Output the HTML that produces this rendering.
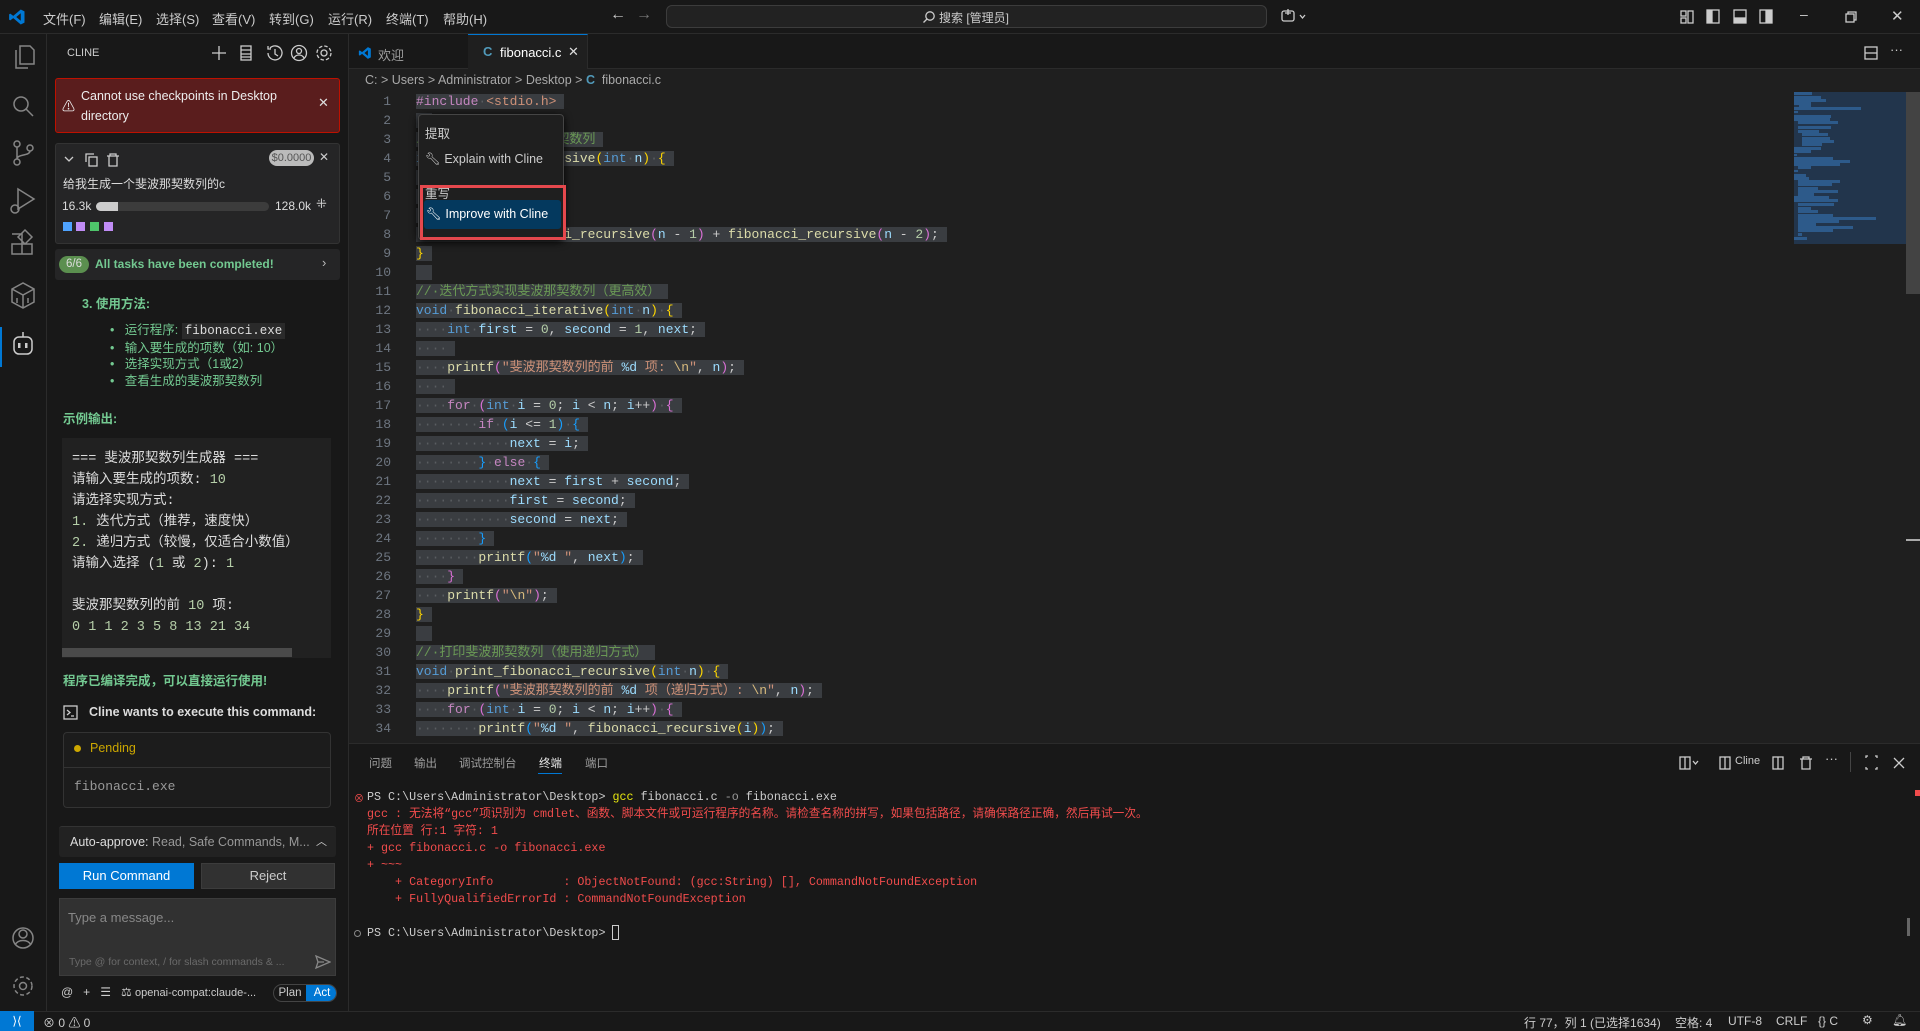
<!DOCTYPE html>
<html><head><meta charset="utf-8">
<style>
*{box-sizing:border-box;margin:0;padding:0}
body{width:1920px;height:1031px;overflow:hidden;background:#1f1f1f;font-family:"Liberation Sans","Noto Sans CJK SC",sans-serif;color:#cccccc;font-size:13px;position:relative}
.a{position:absolute}
.mono{font-family:"Liberation Mono","Noto Sans CJK SC",monospace}
#title{left:0;top:0;width:1920px;height:34px;background:#181818;border-bottom:1px solid #2b2b2b}
.menu{top:9px;font-size:13px;color:#cccccc}
#act{left:0;top:34px;width:47px;height:977px;background:#181818;border-right:1px solid #2b2b2b}
#side{left:47px;top:34px;width:302px;height:977px;background:#181818;border-right:1px solid #2b2b2b}
#tabs{left:349px;top:34px;width:1571px;height:35px;background:#181818;border-bottom:1px solid #2b2b2b}
.ln{position:absolute;left:349px;width:42px;text-align:right;color:#6e7681;font-size:13px;line-height:19px}
.cl{position:absolute;left:416px;font-size:13px;line-height:19px;white-space:pre;color:#cccccc}
.sel{background:#3a3d41;padding-right:8px}
i{font-style:normal;color:#5a5d61}
.k{color:#569cd6}.c{color:#c586c0}.f{color:#dcdcaa}.s{color:#ce9178}.n{color:#b5cea8}.v{color:#9cdcfe}.m{color:#6a9955}.g{color:#ffd700}.p{color:#da70d6}.b{color:#179fff}
#panel{left:349px;top:743px;width:1571px;height:268px;background:#181818;border-top:1px solid #2b2b2b}
.tl{position:absolute;left:367px;font-size:11.7px;line-height:17px;white-space:pre;color:#f14c4c}
#status{left:0;top:1011px;width:1920px;height:20px;background:#181818;border-top:1px solid #2b2b2b;font-size:12px}
.ptab{position:absolute;top:755px;font-size:11.5px;color:#9d9d9d}
.green{color:#73c991}
.icon{position:absolute;stroke:#cccccc;fill:none;stroke-width:1.3}
</style></head><body>

<div id="title" class="a"></div>
<svg class="a" style="left:8px;top:8px" width="18" height="18" viewBox="0 0 24 24"><path d="M17 2 L22 4.5 V19.5 L17 22 L7 13.5 L3 16.5 L1.5 15.5 V8.5 L3 7.5 L7 10.5 Z M17 7 L11 12 L17 17 Z" fill="#0078d4"/></svg>
<div class="a menu" style="left:43px">文件(F)</div>
<div class="a menu" style="left:99px">编辑(E)</div>
<div class="a menu" style="left:156px">选择(S)</div>
<div class="a menu" style="left:212px">查看(V)</div>
<div class="a menu" style="left:269px">转到(G)</div>
<div class="a menu" style="left:328px">运行(R)</div>
<div class="a menu" style="left:386px">终端(T)</div>
<div class="a menu" style="left:443px">帮助(H)</div>
<div class="a" style="left:610px;top:6px;font-size:16px;color:#ccc">←</div>
<div class="a" style="left:636px;top:6px;font-size:16px;color:#777">→</div>
<div class="a" style="left:666px;top:5px;width:601px;height:23px;background:#222;border:1px solid #3c3c3c;border-radius:6px"></div>
<svg class="a icon" style="left:922px;top:10px" width="14" height="14" viewBox="0 0 14 14"><circle cx="8" cy="6" r="4.2"/><path d="M5 9 L1.5 12.5"/></svg>
<div class="a" style="left:939px;top:9px;font-size:12px;color:#ccc">搜索 [管理员]</div>
<svg class="a icon" style="left:1280px;top:8px" width="28" height="18" viewBox="0 0 28 18"><rect x="2" y="3" width="12" height="10" rx="2"/><path d="M8 1 V7 M5 5 H11 M20 7 L22.5 10 L25 7"/></svg>
<svg class="a icon" style="left:1680px;top:9px" width="100" height="16" viewBox="0 0 100 16"><rect x="1" y="2" width="5" height="5"/><rect x="1" y="9" width="5" height="5"/><rect x="8" y="2" width="5" height="12"/><rect x="27" y="1" width="12" height="13"/><rect x="28" y="2" width="4" height="11" fill="#ccc"/><rect x="54" y="1" width="12" height="13"/><rect x="55" y="9" width="10" height="4" fill="#ccc"/><rect x="80" y="1" width="12" height="13"/><rect x="86" y="2" width="5" height="11" fill="#ccc"/></svg>
<div class="a" style="left:1800px;top:6px;font-size:14px;color:#ccc">–</div>
<svg class="a icon" style="left:1845px;top:11px" width="12" height="12" viewBox="0 0 12 12"><rect x="1" y="3" width="8" height="8"/><path d="M3 3 V1 H11 V9 H9"/></svg>
<div class="a" style="left:1891px;top:7px;font-size:15px;color:#ccc">✕</div>

<div id="act" class="a"></div>
<svg class="a" style="left:0;top:34px" width="47" height="977" viewBox="0 0 47 977" fill="none" stroke="#858585" stroke-width="1.5">
<path d="M16 16 V34 H28 M20 12 H30 L34 16 V30 H20 Z"/>
<circle cx="21" cy="70" r="7"/><path d="M26 75 L33 82"/>
<circle cx="17" cy="110" r="3"/><circle cx="17" cy="128" r="3"/><circle cx="30" cy="114" r="3"/><path d="M17 113 V125 M30 117 C30 122 17 120 17 125"/>
<path d="M18 155 L34 165 L18 175 Z"/><circle cx="15" cy="175" r="4"/>
<path d="M12 210 H22 V220 H12 Z M12 200 H22 V210 M22 210 H32 V220 H22 M25 196 L32 203 L25 210 L18 203 Z"/>
<path d="M12 255 L23 249 L34 255 V268 L23 274 L12 268 Z M12 255 L23 261 L34 255 M23 261 V274 M17 264 V269 M28 264 V269"/>
<rect x="14" y="303" width="18" height="17" rx="5" stroke="#cccccc"/><path d="M23 298 V303" stroke="#cccccc"/><rect x="18" y="309" width="2.5" height="5" fill="#ccc" stroke="none"/><rect x="25" y="309" width="2.5" height="5" fill="#ccc" stroke="none"/>
<circle cx="23" cy="904" r="10"/><circle cx="23" cy="900" r="4"/><path d="M15 911 C18 905 28 905 31 911"/>
<circle cx="23" cy="952" r="3.5"/><circle cx="23" cy="952" r="9" stroke-dasharray="4 2.5"/>
</svg>
<div class="a" style="left:0;top:327px;width:2px;height:40px;background:#0078d4"></div>

<div id="side" class="a"></div>
<div class="a" style="left:67px;top:47px;font-size:11px;color:#ccc">CLINE</div>
<svg class="a icon" style="left:211px;top:44px" width="125" height="18" viewBox="0 0 125 18"><path d="M8 2 V16 M1 9 H15"/><rect x="30" y="2" width="10" height="14"/><path d="M30 6 H40 M30 10 H40 M30 13 H40"/><path d="M57 9 A7 7 0 1 0 59 4 M57 2 V5 H60 M64 5 V10 L67 12"/><circle cx="88" cy="9" r="7.5"/><circle cx="88" cy="7" r="2.5"/><path d="M83 14 C85 10 91 10 93 14"/><circle cx="113" cy="9" r="3"/><circle cx="113" cy="9" r="7" stroke-dasharray="3.5 2"/></svg>

<div class="a" style="left:55px;top:78px;width:285px;height:55px;background:#5a1d1d;border:1px solid #be1100;border-radius:3px"></div>
<div class="a" style="left:62px;top:96px;font-size:13px;color:#eee">⚠</div>
<div class="a" style="left:81px;top:86px;font-size:12.5px;color:#eee;line-height:20px;width:220px">Cannot use checkpoints in Desktop directory</div>
<div class="a" style="left:318px;top:95px;font-size:13px;color:#ddd">✕</div>

<div class="a" style="left:55px;top:143px;width:285px;height:101px;background:#252526;border:1px solid #333;border-radius:3px"></div>
<svg class="a icon" style="left:63px;top:152px" width="70" height="16" viewBox="0 0 70 16"><path d="M2 5 L6 9 L10 5"/><rect x="26" y="5" width="8" height="9"/><path d="M23 10 V2 H31"/><path d="M44 4 H56 M47 4 V2 H53 V4 M46 4 V14 H54 V4"/></svg>
<div class="a" style="left:269px;top:150px;width:45px;height:16px;background:#bbb;border-radius:8px;color:#555;font-size:11px;text-align:center;line-height:16px">$0.0000</div>
<div class="a" style="left:319px;top:150px;font-size:12px;color:#ccc">✕</div>
<div class="a" style="left:63px;top:175px;font-size:12px;color:#ddd">给我生成一个斐波那契数列的c</div>
<div class="a" style="left:62px;top:199px;font-size:12px;color:#ddd">16.3k</div>
<div class="a" style="left:96px;top:202px;width:173px;height:9px;background:#3c3c3c;border-radius:5px"></div>
<div class="a" style="left:96px;top:202px;width:22px;height:9px;background:#ccc;border-radius:5px 0 0 5px"></div>
<div class="a" style="left:275px;top:199px;font-size:12px;color:#ddd">128.0k</div>
<div class="a" style="left:316px;top:196px;font-size:13px;color:#ccc">⁜</div>
<div class="a" style="left:63px;top:222px;width:9px;height:9px;background:#4fa3ff"></div>
<div class="a" style="left:76px;top:222px;width:9px;height:9px;background:#c08cf5"></div>
<div class="a" style="left:90px;top:222px;width:9px;height:9px;background:#4ec46a"></div>
<div class="a" style="left:104px;top:222px;width:9px;height:9px;background:#c08cf5"></div>

<div class="a" style="left:55px;top:249px;width:285px;height:31px;background:#252526;border-radius:3px"></div>
<div class="a" style="left:59px;top:256px;width:30px;height:17px;background:#5b8f4f;border-radius:9px;color:#ddd;font-size:11.5px;text-align:center;line-height:17px">6/6</div>
<div class="a green" style="left:95px;top:257px;font-size:12px;font-weight:bold">All tasks have been completed!</div>
<div class="a" style="left:322px;top:255px;font-size:13px;color:#bbb">›</div>

<div class="a green" style="left:82px;top:293px;font-size:12.5px;font-weight:bold">3. 使用方法:</div>
<div class="a green" style="left:110px;top:322px;font-size:12.5px;line-height:16.5px">
<div>•&nbsp;&nbsp; 运行程序: <span class="mono" style="background:#2a2a2a;color:#ddd;padding:1px 3px">fibonacci.exe</span></div>
<div>•&nbsp;&nbsp; 输入要生成的项数（如: 10）</div>
<div>•&nbsp;&nbsp; 选择实现方式（1或2）</div>
<div>•&nbsp;&nbsp; 查看生成的斐波那契数列</div>
</div>
<div class="a green" style="left:63px;top:408px;font-size:12.5px;font-weight:bold">示例输出:</div>
<div class="a" style="left:62px;top:438px;width:269px;height:220px;background:#212121"></div>
<div class="a mono" style="left:72px;top:449px;font-size:13.5px;line-height:21px;color:#ddd;white-space:pre">=== 斐波那契数列生成器 ===
请输入要生成的项数: <span class="n">10</span>
请选择实现方式:
<span class="n">1.</span> 迭代方式（推荐，速度快）
<span class="n">2.</span> 递归方式（较慢，仅适合小数值）
请输入选择 (<span class="n">1</span> 或 <span class="n">2</span>): <span class="n">1</span>

斐波那契数列的前 <span class="n">10</span> 项:
<span class="n">0 1 1 2 3 5 8 13 21 34</span></div>
<div class="a" style="left:62px;top:648px;width:230px;height:9px;background:#4a4a4a"></div>
<div class="a green" style="left:63px;top:670px;font-size:12.5px;font-weight:bold">程序已编译完成，可以直接运行使用!</div>
<svg class="a icon" style="left:63px;top:705px" width="15" height="15" viewBox="0 0 15 15"><rect x="1" y="1" width="13" height="13"/><path d="M4 5 L7 7.5 L4 10 M8 11 H11"/></svg>
<div class="a" style="left:89px;top:705px;font-size:12.5px;font-weight:bold;color:#ddd">Cline wants to execute this command:</div>
<div class="a" style="left:63px;top:732px;width:268px;height:76px;border:1px solid #333;border-radius:4px;background:#1c1c1c"></div>
<div class="a" style="left:63px;top:767px;width:268px;height:1px;background:#333"></div>
<div class="a" style="left:74px;top:745px;width:7px;height:7px;border-radius:50%;background:#cca700"></div>
<div class="a" style="left:90px;top:741px;font-size:12.5px;color:#cca700">Pending</div>
<div class="a mono" style="left:74px;top:779px;font-size:13px;color:#999">fibonacci.exe</div>
<div class="a" style="left:59px;top:826px;width:277px;height:31px;background:#222;border-top:1px solid #333;border-radius:3px"></div>
<div class="a" style="left:70px;top:835px;font-size:12.5px;color:#ddd">Auto-approve: <span style="color:#999">Read, Safe Commands, M...</span></div>
<div class="a" style="left:316px;top:833px;font-size:11px;color:#ccc">︿</div>
<div class="a" style="left:59px;top:863px;width:135px;height:26px;background:#0078d4;color:#fff;text-align:center;line-height:26px;font-size:13px">Run Command</div>
<div class="a" style="left:201px;top:863px;width:134px;height:26px;background:#313131;border:1px solid #3c3c3c;color:#ccc;text-align:center;line-height:24px;font-size:13px">Reject</div>
<div class="a" style="left:59px;top:898px;width:277px;height:78px;background:#313131;border:1px solid #3c3c3c"></div>
<div class="a" style="left:68px;top:910px;font-size:13px;color:#888">Type a message...</div>
<div class="a" style="left:69px;top:956px;font-size:10.5px;color:#6a6a6a">Type @ for context, / for slash commands &amp; ...</div>
<svg class="a icon" style="left:315px;top:955px" width="16" height="14" viewBox="0 0 16 14"><path d="M1 1 L15 7 L1 13 L3 7 Z M3 7 H9" stroke="#888"/></svg>
<div class="a" style="left:61px;top:985px;font-size:12px;color:#ccc">@&nbsp;&nbsp; +&nbsp;&nbsp; ☰&nbsp;&nbsp; ⚖ <span style="font-size:11px">openai-compat:claude-...</span></div>
<div class="a" style="left:273px;top:984px;width:64px;height:18px;border:1px solid #444;border-radius:9px;overflow:hidden;font-size:11.5px">
<div class="a" style="left:0;top:0;width:32px;height:16px;text-align:center;line-height:16px;color:#ccc">Plan</div>
<div class="a" style="left:32px;top:0;width:32px;height:16px;background:#0078d4;text-align:center;line-height:16px;color:#fff">Act</div></div>

<div id="tabs" class="a"></div>
<div class="a" style="left:468px;top:34px;width:120px;height:35px;background:#1f1f1f;border-top:1px solid #0078d4;border-right:1px solid #2b2b2b"></div>
<svg class="a" style="left:358px;top:46px" width="14" height="14" viewBox="0 0 24 24"><path d="M17 2 L22 4.5 V19.5 L17 22 L7 13.5 L3 16.5 L1.5 15.5 V8.5 L3 7.5 L7 10.5 Z M17 7 L11 12 L17 17 Z" fill="#0078d4"/></svg>
<div class="a" style="left:378px;top:45px;font-size:13px;color:#9d9d9d">欢迎</div>
<div class="a" style="left:483px;top:44px;font-size:13px;color:#519aba;font-weight:bold">C</div>
<div class="a" style="left:500px;top:45px;font-size:13px;color:#fff">fibonacci.c</div>
<div class="a" style="left:568px;top:44px;font-size:13px;color:#ddd">✕</div>
<svg class="a icon" style="left:1864px;top:46px" width="14" height="14" viewBox="0 0 14 14"><rect x="1" y="1" width="12" height="12"/><path d="M1 7 H13"/></svg>
<div class="a" style="left:1890px;top:42px;font-size:13px;color:#ccc">···</div>

<div class="a" style="left:365px;top:73px;font-size:12.5px;color:#a9a9a9">C: &gt; Users &gt; Administrator &gt; Desktop &gt; <span style="color:#519aba;font-weight:bold">C</span>&nbsp; fibonacci.c</div>

<div class="mono">
<div class="ln" style="top:92px">1</div><div class="ln" style="top:111px">2</div><div class="ln" style="top:130px">3</div><div class="ln" style="top:149px">4</div><div class="ln" style="top:168px">5</div><div class="ln" style="top:187px">6</div><div class="ln" style="top:206px">7</div><div class="ln" style="top:225px">8</div><div class="ln" style="top:244px">9</div><div class="ln" style="top:263px">10</div><div class="ln" style="top:282px">11</div><div class="ln" style="top:301px">12</div><div class="ln" style="top:320px">13</div><div class="ln" style="top:339px">14</div><div class="ln" style="top:358px">15</div><div class="ln" style="top:377px">16</div><div class="ln" style="top:396px">17</div><div class="ln" style="top:415px">18</div><div class="ln" style="top:434px">19</div><div class="ln" style="top:453px">20</div><div class="ln" style="top:472px">21</div><div class="ln" style="top:491px">22</div><div class="ln" style="top:510px">23</div><div class="ln" style="top:529px">24</div><div class="ln" style="top:548px">25</div><div class="ln" style="top:567px">26</div><div class="ln" style="top:586px">27</div><div class="ln" style="top:605px">28</div><div class="ln" style="top:624px">29</div><div class="ln" style="top:643px">30</div><div class="ln" style="top:662px">31</div><div class="ln" style="top:681px">32</div><div class="ln" style="top:700px">33</div><div class="ln" style="top:719px">34</div>

<div class="cl" style="top:92px"><span class="sel"><span class="c">#include</span><i>·</i><span class="s">&lt;stdio.h&gt;</span></span></div>
<div class="cl" style="top:111px"><span class="sel"> </span></div>
<div class="cl" style="top:130px"><span class="sel"><span class="m">//·递归方式实现斐波那契数列</span></span></div>
<div class="cl" style="top:149px"><span class="sel"><span class="k">int</span><i>·</i><span class="f">fibonacci_recursive</span><span class="g">(</span><span class="k">int</span><i>·</i><span class="v">n</span><span class="g">)</span><i>·</i><span class="g">{</span></span></div>
<div class="cl" style="top:168px"><span class="sel"><i>····</i><span class="c">if</span><i>·</i><span class="p">(</span><span class="v">n</span> &lt;= <span class="n">1</span><span class="p">)</span><i>·</i><span class="p">{</span></span></div>
<div class="cl" style="top:187px"><span class="sel"><i>········</i><span class="c">return</span><i>·</i><span class="v">n</span>;</span></div>
<div class="cl" style="top:206px"><span class="sel"><i>····</i><span class="p">}</span></span></div>
<div class="cl" style="top:225px"><span class="sel"><i>····</i><span class="c">return</span><i>·</i><span class="f">fibonacci_recursive</span><span class="p">(</span><span class="v">n</span> - <span class="n">1</span><span class="p">)</span> + <span class="f">fibonacci_recursive</span><span class="p">(</span><span class="v">n</span> - <span class="n">2</span><span class="p">)</span>;</span></div>
<div class="cl" style="top:244px"><span class="sel"><span class="g">}</span></span></div>
<div class="cl" style="top:263px"><span class="sel"> </span></div>
<div class="cl" style="top:282px"><span class="sel"><span class="m">//·迭代方式实现斐波那契数列（更高效）</span></span></div>
<div class="cl" style="top:301px"><span class="sel"><span class="k">void</span><i>·</i><span class="f">fibonacci_iterative</span><span class="g">(</span><span class="k">int</span><i>·</i><span class="v">n</span><span class="g">)</span><i>·</i><span class="g">{</span></span></div>
<div class="cl" style="top:320px"><span class="sel"><i>····</i><span class="k">int</span><i>·</i><span class="v">first</span> = <span class="n">0</span>, <span class="v">second</span> = <span class="n">1</span>, <span class="v">next</span>;</span></div>
<div class="cl" style="top:339px"><span class="sel"><i>····</i></span></div>
<div class="cl" style="top:358px"><span class="sel"><i>····</i><span class="f">printf</span><span class="p">(</span><span class="s">"斐波那契数列的前 <span class="v">%d</span> 项: <span style="color:#d7ba7d">\n</span>"</span>, <span class="v">n</span><span class="p">)</span>;</span></div>
<div class="cl" style="top:377px"><span class="sel"><i>····</i></span></div>
<div class="cl" style="top:396px"><span class="sel"><i>····</i><span class="c">for</span><i>·</i><span class="p">(</span><span class="k">int</span><i>·</i><span class="v">i</span> = <span class="n">0</span>; <span class="v">i</span> &lt; <span class="v">n</span>; <span class="v">i</span>++<span class="p">)</span><i>·</i><span class="p">{</span></span></div>
<div class="cl" style="top:415px"><span class="sel"><i>········</i><span class="c">if</span><i>·</i><span class="b">(</span><span class="v">i</span> &lt;= <span class="n">1</span><span class="b">)</span><i>·</i><span class="b">{</span></span></div>
<div class="cl" style="top:434px"><span class="sel"><i>············</i><span class="v">next</span> = <span class="v">i</span>;</span></div>
<div class="cl" style="top:453px"><span class="sel"><i>········</i><span class="b">}</span><i>·</i><span class="c">else</span><i>·</i><span class="b">{</span></span></div>
<div class="cl" style="top:472px"><span class="sel"><i>············</i><span class="v">next</span> = <span class="v">first</span> + <span class="v">second</span>;</span></div>
<div class="cl" style="top:491px"><span class="sel"><i>············</i><span class="v">first</span> = <span class="v">second</span>;</span></div>
<div class="cl" style="top:510px"><span class="sel"><i>············</i><span class="v">second</span> = <span class="v">next</span>;</span></div>
<div class="cl" style="top:529px"><span class="sel"><i>········</i><span class="b">}</span></span></div>
<div class="cl" style="top:548px"><span class="sel"><i>········</i><span class="f">printf</span><span class="b">(</span><span class="s">"<span class="v">%d</span> "</span>, <span class="v">next</span><span class="b">)</span>;</span></div>
<div class="cl" style="top:567px"><span class="sel"><i>····</i><span class="p">}</span></span></div>
<div class="cl" style="top:586px"><span class="sel"><i>····</i><span class="f">printf</span><span class="p">(</span><span class="s">"<span style="color:#d7ba7d">\n</span>"</span><span class="p">)</span>;</span></div>
<div class="cl" style="top:605px"><span class="sel"><span class="g">}</span></span></div>
<div class="cl" style="top:624px"><span class="sel"> </span></div>
<div class="cl" style="top:643px"><span class="sel"><span class="m">//·打印斐波那契数列（使用递归方式）</span></span></div>
<div class="cl" style="top:662px"><span class="sel"><span class="k">void</span><i>·</i><span class="f">print_fibonacci_recursive</span><span class="g">(</span><span class="k">int</span><i>·</i><span class="v">n</span><span class="g">)</span><i>·</i><span class="g">{</span></span></div>
<div class="cl" style="top:681px"><span class="sel"><i>····</i><span class="f">printf</span><span class="p">(</span><span class="s">"斐波那契数列的前 <span class="v">%d</span> 项（递归方式）: <span style="color:#d7ba7d">\n</span>"</span>, <span class="v">n</span><span class="p">)</span>;</span></div>
<div class="cl" style="top:700px"><span class="sel"><i>····</i><span class="c">for</span><i>·</i><span class="p">(</span><span class="k">int</span><i>·</i><span class="v">i</span> = <span class="n">0</span>; <span class="v">i</span> &lt; <span class="v">n</span>; <span class="v">i</span>++<span class="p">)</span><i>·</i><span class="p">{</span></span></div>
<div class="cl" style="top:719px"><span class="sel"><i>········</i><span class="f">printf</span><span class="b">(</span><span class="s">"<span class="v">%d</span> "</span>, <span class="f">fibonacci_recursive</span><span class="g">(</span><span class="v">i</span><span class="g">)</span><span class="b">)</span>;</span></div>
</div>

<div class="a" style="left:1794px;top:92px;width:112px;height:152px;background:#22354c"></div>
<svg class="a" style="left:1794px;top:92px" width="112" height="152"><g fill="#2d5a8a">
<rect x="0" y="0" width="18" height="3"/><rect x="0" y="4" width="27" height="3"/><rect x="0" y="7" width="32" height="3"/><rect x="0" y="10" width="17" height="3"/><rect x="5" y="13" width="12" height="2"/><rect x="0" y="15" width="67" height="3"/><rect x="0" y="19" width="4" height="2"/><rect x="0" y="23" width="37" height="3"/><rect x="0" y="26" width="36" height="3"/><rect x="4" y="29" width="40" height="3"/><rect x="4" y="34" width="33" height="3"/><rect x="4" y="38" width="21" height="3"/><rect x="8" y="41" width="26" height="3"/><rect x="8" y="45" width="28" height="3"/><rect x="8" y="48" width="32" height="3"/><rect x="8" y="51" width="20" height="3"/><rect x="0" y="55" width="27" height="3"/><rect x="0" y="58" width="17" height="3"/><rect x="0" y="62" width="3" height="2"/><rect x="0" y="65" width="39" height="3"/><rect x="0" y="68" width="56" height="3"/><rect x="0" y="71" width="46" height="3"/><rect x="4" y="74" width="13" height="3"/><rect x="0" y="78" width="4" height="2"/><rect x="0" y="82" width="12" height="3"/><rect x="0" y="85" width="15" height="3"/><rect x="4" y="88" width="42" height="3"/><rect x="4" y="91" width="34" height="3"/><rect x="4" y="95" width="20" height="3"/><rect x="4" y="98" width="40" height="3"/><rect x="4" y="101" width="16" height="3"/><rect x="0" y="104" width="35" height="3"/><rect x="0" y="107" width="44" height="3"/><rect x="4" y="111" width="36" height="3"/><rect x="4" y="115" width="13" height="3"/><rect x="4" y="118" width="20" height="3"/><rect x="4" y="122" width="35" height="3"/><rect x="4" y="125" width="78" height="3"/><rect x="4" y="128" width="41" height="3"/><rect x="4" y="131" width="18" height="3"/><rect x="4" y="134" width="55" height="3"/><rect x="4" y="137" width="35" height="3"/><rect x="4" y="141" width="4" height="3"/><rect x="0" y="145" width="13" height="3"/></g></svg>
<div class="a" style="left:1906px;top:92px;width:14px;height:202px;background:#434343"></div>
<div class="a" style="left:1906px;top:539px;width:14px;height:2px;background:#aaa"></div>

<div class="a" style="left:418px;top:114px;width:146px;height:126px;background:#1f1f1f;border:1px solid #454545;border-radius:4px;box-shadow:0 2px 8px #000"></div>
<div class="a" style="left:425px;top:123px;font-size:12.5px;color:#ccc">提取</div>
<div class="a" style="left:425px;top:152px;font-size:12.5px;color:#ccc">🔧︎ Explain with Cline</div>
<div class="a" style="left:425px;top:183px;font-size:12.5px;color:#ccc">重写</div>
<div class="a" style="left:424px;top:200px;width:137px;height:29px;background:#04395e;border-radius:3px"></div>
<div class="a" style="left:426px;top:207px;font-size:12.5px;color:#fff">🔧︎ Improve with Cline</div>
<div class="a" style="left:420px;top:185px;width:146px;height:55px;border:3px solid #e5484d"></div>

<div id="panel" class="a"></div>
<div class="ptab" style="left:369px">问题</div>
<div class="ptab" style="left:414px">输出</div>
<div class="ptab" style="left:459px">调试控制台</div>
<div class="ptab" style="left:539px;color:#e7e7e7">终端</div>
<div class="a" style="left:538px;top:773px;width:24px;height:1px;background:#0078d4"></div>
<div class="ptab" style="left:585px">端口</div>
<svg class="a icon" style="left:1678px;top:755px" width="240" height="16" viewBox="0 0 240 16"><rect x="2" y="2" width="10" height="12"/><path d="M7 2 V14 M15 6 L17.5 9 L20 6"/><rect x="42" y="2" width="10" height="12"/><path d="M47 2 V14"/><rect x="95" y="2" width="10" height="12"/><path d="M100 2 V14 M122 4 H134 M125 4 V2 H131 V4 M124 4 V14 H132 V4"/><path d="M188 3 V1 H190 M197 1 H199 V3 M199 12 V14 H197 M190 14 H188 V12"/><path d="M216 3 L226 13 M226 3 L216 13"/></svg>
<div class="a" style="left:1735px;top:755px;font-size:11px;color:#ccc">Cline</div>
<div class="a" style="left:1825px;top:751px;font-size:13px;color:#ccc">···</div>
<div class="a" style="left:1850px;top:752px;width:1px;height:20px;background:#444"></div>

<div class="mono">
<div class="a" style="left:354px;top:790px;font-size:10px;color:#f14c4c">⊗</div>
<div class="tl" style="top:789px;color:#ccc">PS C:\Users\Administrator\Desktop&gt; <span style="color:#e5e510">gcc</span> fibonacci.c <span style="color:#999">-o</span> fibonacci.exe</div>
<div class="tl" style="top:806px">gcc : 无法将“gcc”项识别为 cmdlet、函数、脚本文件或可运行程序的名称。请检查名称的拼写，如果包括路径，请确保路径正确，然后再试一次。</div>
<div class="tl" style="top:823px">所在位置 行:1 字符: 1</div>
<div class="tl" style="top:840px">+ gcc fibonacci.c -o fibonacci.exe</div>
<div class="tl" style="top:857px">+ ~~~</div>
<div class="tl" style="top:874px">    + CategoryInfo          : ObjectNotFound: (gcc:String) [], CommandNotFoundException</div>
<div class="tl" style="top:891px">    + FullyQualifiedErrorId : CommandNotFoundException</div>
<div class="a" style="left:354px;top:930px;width:7px;height:7px;border:1px solid #888;border-radius:50%"></div>
<div class="tl" style="top:925px;color:#ccc">PS C:\Users\Administrator\Desktop&gt; <span style="display:inline-block;width:7px;height:15px;border:1px solid #ccc;vertical-align:middle"></span></div>
</div>
<div class="a" style="left:1915px;top:790px;width:5px;height:6px;background:#f14c4c"></div>
<div class="a" style="left:1907px;top:918px;width:3px;height:18px;background:#666"></div>

<div id="status" class="a"></div>
<div class="a" style="left:0;top:1011px;width:34px;height:20px;background:#0078d4;color:#fff;text-align:center;font-size:12px;line-height:20px">⟩⟨</div>
<div class="a" style="left:43px;top:1014px;font-size:12px;color:#ccc">⊗ 0 ⚠ 0</div>
<div class="a" style="left:1524px;top:1014px;font-size:12px;color:#ccc">行 77，列 1 (已选择1634)</div>
<div class="a" style="left:1675px;top:1014px;font-size:12px;color:#ccc">空格: 4</div>
<div class="a" style="left:1728px;top:1014px;font-size:12px;color:#ccc">UTF-8</div>
<div class="a" style="left:1776px;top:1014px;font-size:12px;color:#ccc">CRLF</div>
<div class="a" style="left:1818px;top:1014px;font-size:12px;color:#ccc">{} C</div>
<div class="a" style="left:1862px;top:1013px;font-size:12px;color:#ccc">⚙</div>
<div class="a" style="left:1892px;top:1013px;font-size:12px;color:#ccc">🔔︎</div>
</body></html>
